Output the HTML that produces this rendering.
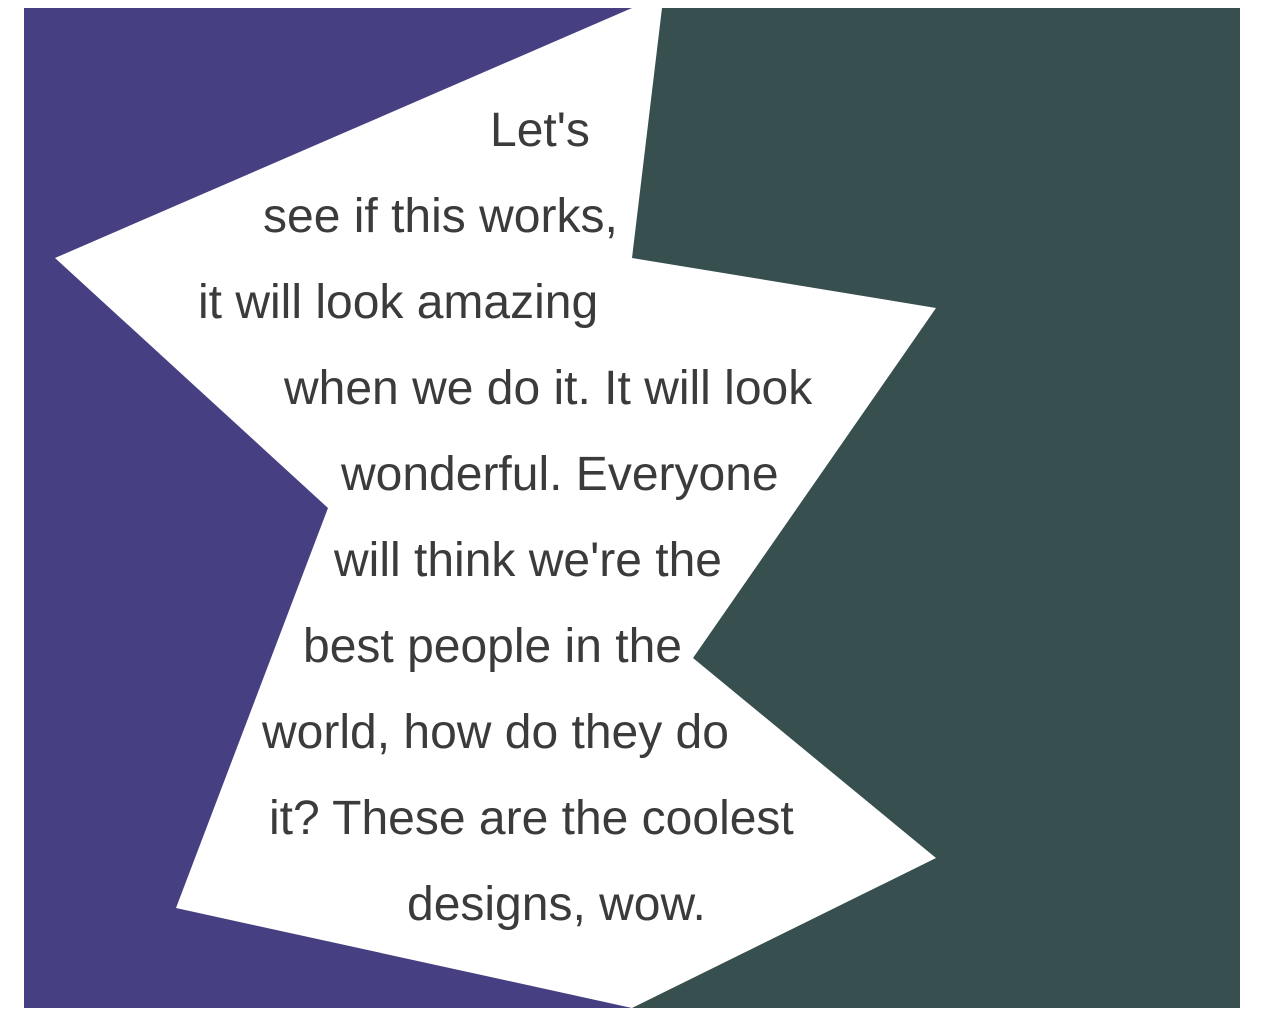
<!DOCTYPE html>
<html><head><meta charset="utf-8"><style>
html,body{margin:0;padding:0;background:#fff;width:1266px;height:1022px;overflow:hidden}
svg{position:absolute;left:0;top:0}
.l{position:absolute;font-family:"Liberation Sans",Arial,sans-serif;font-size:48px;line-height:48px;color:#3b3b3b;white-space:nowrap}
</style></head><body>
<svg width="1266" height="1022">
<polygon fill="#463f82" points="24,8 632,8 55,258 328,508 176,908 632,1008 24,1008"/>
<polygon fill="#374f4f" points="662,8 1240,8 1240,1008 632,1008 936,858 693,658 936,308 632,258"/>
</svg>
<div class="l" style="left:490px;top:107px">Let's</div>
<div class="l" style="left:263px;top:193px">see if this works,</div>
<div class="l" style="left:198px;top:279px">it will look amazing</div>
<div class="l" style="left:284px;top:365px">when we do it. It will look</div>
<div class="l" style="left:341px;top:451px">wonderful. Everyone</div>
<div class="l" style="left:334px;top:537px">will think we're the</div>
<div class="l" style="left:303px;top:623px">best people in the</div>
<div class="l" style="left:262px;top:709px">world, how do they do</div>
<div class="l" style="left:269px;top:795px">it? These are the coolest</div>
<div class="l" style="left:407px;top:881px">designs, wow.</div>
</body></html>
